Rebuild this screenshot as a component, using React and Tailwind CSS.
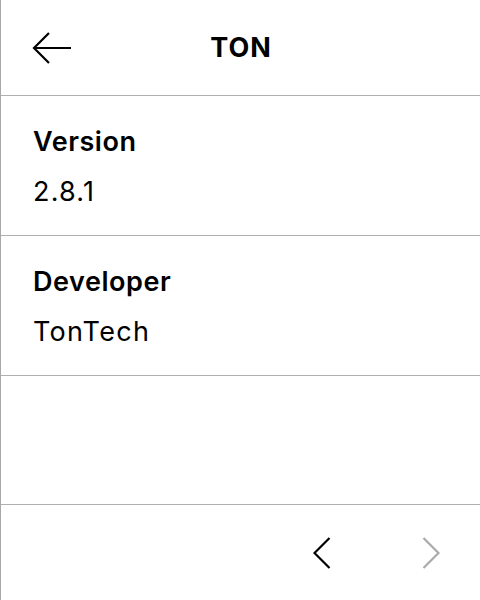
export default function App() {
  const font = { fontFamily: "Inter, 'Noto Sans', sans-serif" };
  return (
    <div
      className="w-[480px] h-[600px] bg-white text-black flex flex-col border-l border-[#a8a8a8] overflow-hidden"
      style={font}
    >
      <div className="h-[96px] shrink-0 border-b border-[#b0b0b0] relative flex items-center justify-center">
        <button className="absolute left-[31px] top-[32px] w-[40px] h-[32px] flex items-center justify-center">
          <svg width="40" height="32" viewBox="0 0 40 32" fill="none" stroke="black" strokeWidth="2.2">
            <path d="M39 16H2" />
            <path d="M17 1L2 16L17 31" />
          </svg>
        </button>
        <div className="text-[27px] font-bold leading-[32px] tracking-[1px] pl-[1px]">TON</div>
      </div>

      <div className="h-[140px] shrink-0 border-b border-[#b0b0b0] pl-[32px] pt-[30px] flex flex-col gap-[18px]">
        <div className="text-[27px] font-semibold leading-[32px] tracking-[0.55px]">Version</div>
        <div className="text-[27px] leading-[32px] tracking-[1.2px]">2.8.1</div>
      </div>

      <div className="h-[140px] shrink-0 border-b border-[#b0b0b0] pl-[32px] pt-[30px] flex flex-col gap-[18px]">
        <div className="text-[27px] font-semibold leading-[32px] tracking-[0.55px]">Developer</div>
        <div className="text-[27px] leading-[32px] tracking-[1.3px]">TonTech</div>
      </div>

      <div className="flex-1" />

      <div className="h-[96px] shrink-0 border-t border-[#b0b0b0] flex items-center justify-end pr-[39px] gap-[89px]">
        <button className="w-[20px] h-[32px] flex items-center justify-center">
          <svg width="18" height="32" viewBox="0 0 18 32" fill="none" stroke="black" strokeWidth="2.2">
            <path d="M16.5 1L1.5 16L16.5 31" />
          </svg>
        </button>
        <button className="w-[20px] h-[32px] flex items-center justify-center">
          <svg width="18" height="32" viewBox="0 0 18 32" fill="none" stroke="#aaaaaa" strokeWidth="2.2">
            <path d="M1.5 1L16.5 16L1.5 31" />
          </svg>
        </button>
      </div>
    </div>
  );
}
